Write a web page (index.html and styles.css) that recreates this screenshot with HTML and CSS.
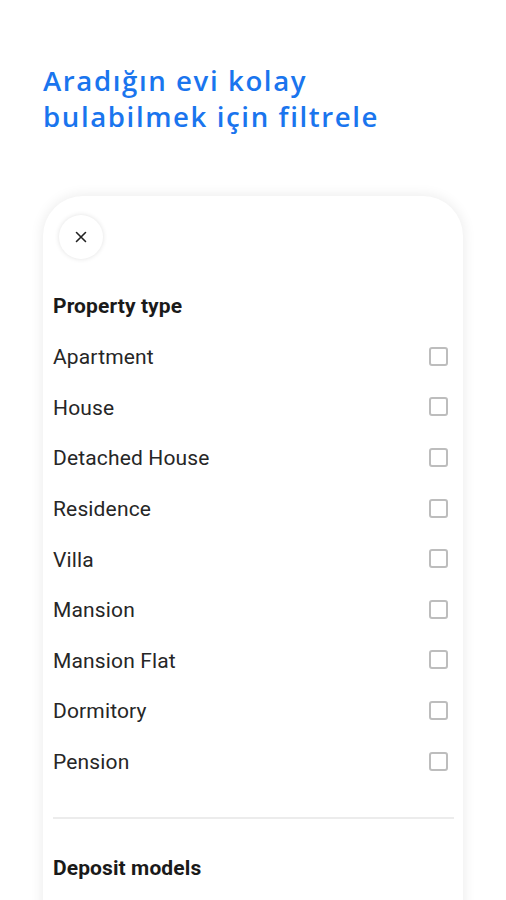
FILE: index.html
```html
<!DOCTYPE html>
<html>
<head>
<meta charset="utf-8">
<link rel="stylesheet" href="styles.css">
</head>
<body>
<div class="page">
  <h1 class="headline">Aradığın evi kolay<br>bulabilmek için filtrele</h1>
  <div class="card">
    <div class="close-row">
      <button class="close" aria-label="close">
        <svg width="14" height="14" viewBox="0 0 14 14"><path d="M2.5 2.5 L11.5 11.5 M11.5 2.5 L2.5 11.5" stroke="#222" stroke-width="1.6" stroke-linecap="round"/></svg>
      </button>
    </div>
    <div class="section-title">Property type</div>
    <ul class="options">
      <li class="option"><span>Apartment</span><span class="box"></span></li>
      <li class="option"><span>House</span><span class="box"></span></li>
      <li class="option"><span>Detached House</span><span class="box"></span></li>
      <li class="option"><span>Residence</span><span class="box"></span></li>
      <li class="option"><span>Villa</span><span class="box"></span></li>
      <li class="option"><span>Mansion</span><span class="box"></span></li>
      <li class="option"><span>Mansion Flat</span><span class="box"></span></li>
      <li class="option"><span>Dormitory</span><span class="box"></span></li>
      <li class="option"><span>Pension</span><span class="box"></span></li>
    </ul>
    <div class="divider"></div>
    <div class="section-title deposit">Deposit models</div>
  </div>
</div>
</body>
</html>
```
FILE: styles.css
```css
html, body {
  margin: 0;
  padding: 0;
  background: #fff;
  overflow: hidden;
  height: 900px;
}
.page {
  font-family: Roboto, "Liberation Sans", sans-serif;
}
.headline {
  margin: 0;
  padding: 62px 0 0 43px;
  font-family: "Open Sans", sans-serif;
  font-weight: 600;
  font-size: 27.6px;
  line-height: 36px;
  letter-spacing: 1.6px;
  color: #1a75ee;
}
.card {
  margin: 62px 43px 0 43px;
  height: 800px;
  background: #fff;
  border-radius: 40px 40px 0 0;
  box-shadow: 0 0 14px rgba(0,0,0,0.09);
  padding: 19px 9px 0 10px;
  box-sizing: border-box;
}
.close-row {
  display: flex;
  padding-left: 6px;
}
.close {
  width: 44px;
  height: 44px;
  border-radius: 50%;
  border: none;
  background: #fff;
  box-shadow: 0 0 5px rgba(0,0,0,0.12);
  display: flex;
  align-items: center;
  justify-content: center;
  padding: 0;
}
.section-title {
  height: 50px;
  margin-top: 22px;
  display: flex;
  align-items: center;
  font-weight: 700;
  font-size: 21px;
  letter-spacing: 0.1px;
  color: #1a1a1a;
}
.options {
  list-style: none;
  margin: 1px 0 0 0;
  padding: 0;
}
.option {
  height: 50.6px;
  display: flex;
  align-items: center;
  justify-content: space-between;
  font-size: 21px;
  letter-spacing: 0.15px;
  color: #262626;
}
.box {
  width: 15px;
  height: 15px;
  border: 2px solid #bdbdbd;
  border-radius: 3px;
  margin-right: 6px;
  margin-top: -2px;
}
.divider {
  height: 2px;
  background: #ececec;
  margin-top: 30px;
}
.deposit {
  margin-top: 24px;
}
```
